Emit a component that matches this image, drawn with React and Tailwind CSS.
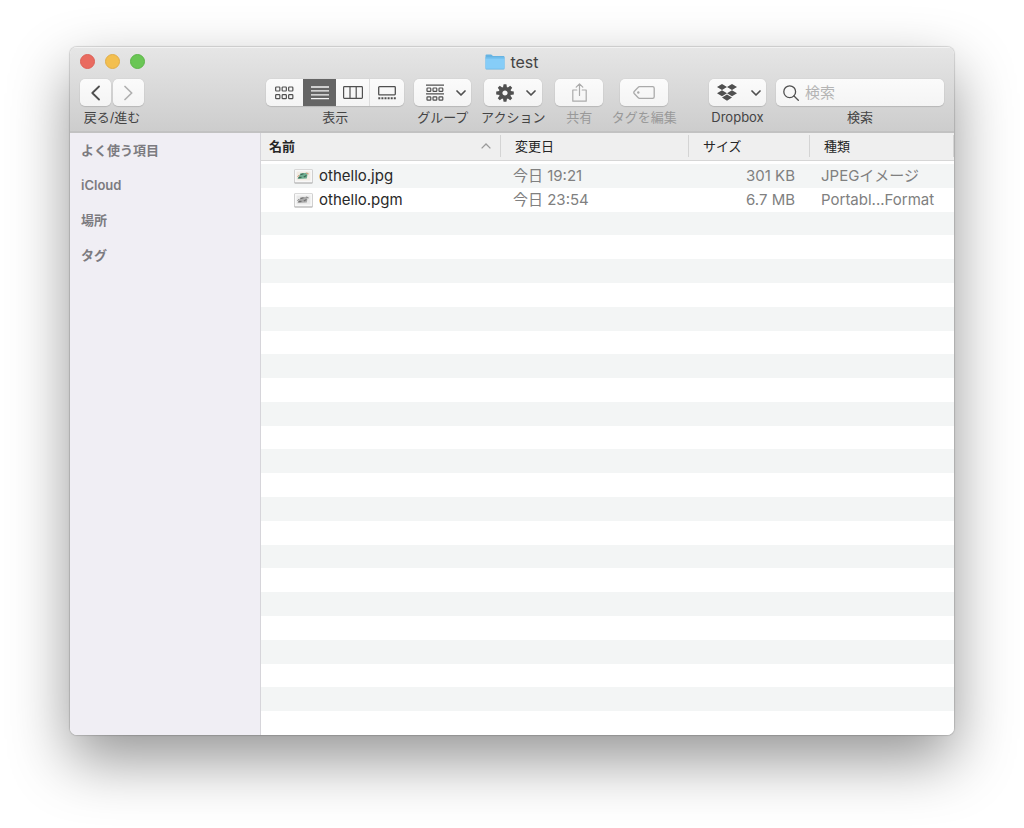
import React from 'react';

const columns = 'grid-cols-[240px_188px_121px_minmax(0,1fr)]';

const files = [
  { name: 'othello.jpg', date: '今日 19:21', size: '301 KB', kind: 'JPEGイメージ', color: true },
  { name: 'othello.pgm', date: '今日 23:54', size: '6.7 MB', kind: 'Portabl...Format', color: false },
];
const emptyRows = Array.from({ length: 22 }, (_, i) => i);
const places = ['よく使う項目', 'iCloud', '場所', 'タグ'];

const buttonLook =
  'flex h-[27px] items-center justify-center bg-linear-to-b from-[#fbfbfb] to-[#f4f4f4] text-[#505050]';
const raised = 'rounded-[5px] shadow-[0_0_1px_rgba(0,0,0,0.2),0_1px_1px_rgba(0,0,0,0.12)]';

function Item({ label, dim, width, children }) {
  return (
    <div className={`flex flex-none flex-col items-center ${width}`}>
      {children}
      <span className={`mt-[3px] text-[13px] leading-4 whitespace-nowrap ${dim ? 'text-[#999999]' : 'text-[#444444]'}`}>
        {label}
      </span>
    </div>
  );
}

function Chevron() {
  return (
    <svg className="h-[6px] w-[10px]" viewBox="0 0 10 6" fill="none" stroke="currentColor" strokeWidth="1.7" strokeLinecap="round" strokeLinejoin="round">
      <path d="M1 1l4 4 4-4" />
    </svg>
  );
}

function GridIcon() {
  const xs = [0.65, 7.15, 13.65];
  return (
    <svg className="h-[14px] w-[19px]" viewBox="0 0 19 14" fill="none" stroke="currentColor" strokeWidth="1.2">
      {[1, 8.7].map((y) => xs.map((x) => <rect key={`${x}-${y}`} x={x} y={y} width="4.2" height="4" rx="0.8" />))}
    </svg>
  );
}

function ListIcon() {
  return (
    <svg className="h-[14px] w-[18px]" viewBox="0 0 18 14" stroke="currentColor" strokeWidth="1.3">
      <path d="M0 1h18M0 4.9h18M0 8.8h18M0 12.7h18" />
    </svg>
  );
}

function ColumnsIcon() {
  return (
    <svg className="h-[13px] w-[20px]" viewBox="0 0 20 13" fill="none" stroke="currentColor" strokeWidth="1.2">
      <rect x="0.6" y="0.6" width="18.8" height="11.8" rx="0.8" />
      <path d="M7 .6v11.8M13.2 .6v11.8" />
    </svg>
  );
}

function GalleryIcon() {
  return (
    <svg className="h-[14px] w-[18px]" viewBox="0 0 18 14" fill="none" stroke="currentColor" strokeWidth="1.3">
      <rect x="0.7" y="0.7" width="16.6" height="8.2" rx="0.8" />
      <path d="M0.3 12.2h17.6" strokeWidth="2" strokeDasharray="2 1.1" />
    </svg>
  );
}

function GroupIcon() {
  const xs = [1, 7, 13];
  return (
    <svg className="h-[18px] w-[18px]" viewBox="0 0 18 18" fill="none" stroke="currentColor" strokeWidth="1.2">
      <path d="M0 1.2h18M0 9.9h18" />
      {[4, 12.8].map((y) => xs.map((x) => <rect key={`${x}-${y}`} x={x} y={y} width="3.8" height="3.4" rx="0.7" />))}
    </svg>
  );
}

function GearIcon() {
  return (
    <svg className="h-[18px] w-[18px]" viewBox="-9 -9 18 18">
      <circle r="4.4" fill="none" stroke="currentColor" strokeWidth="3.6" />
      {[0, 45, 90, 135, 180, 225, 270, 315].map((a) => (
        <path key={a} transform={`rotate(${a})`} d="M-2 -5.5L-1.4 -8.8H1.4L2 -5.5Z" fill="currentColor" />
      ))}
    </svg>
  );
}

function ShareIcon() {
  return (
    <svg className="h-[19px] w-[15px]" viewBox="0 0 15 19" fill="none" stroke="currentColor" strokeWidth="1.2" strokeLinecap="round" strokeLinejoin="round">
      <path d="M4.8 7H.8v11.2h13.4V7h-4M7.5 12.5V1M4.2 4.2L7.5 .9l3.3 3.3" />
    </svg>
  );
}

function TagIcon() {
  return (
    <svg className="h-[13px] w-[22px]" viewBox="0 0 22 13" fill="none" stroke="currentColor" strokeWidth="1.3" strokeLinejoin="round">
      <path d="M6.6 .7H19.6q1.6 0 1.6 1.6v8.4q0 1.6-1.6 1.6H6.6q-.9 0-1.6-.8L1.2 7.5q-.8-1 0-2L5 1.5q.7-.8 1.6-.8z" />
      <circle cx="5.3" cy="6.5" r="1.2" fill="currentColor" stroke="none" />
    </svg>
  );
}

function DropboxIcon() {
  return (
    <svg className="h-[17px] w-[20px]" viewBox="0 0 20 17" fill="currentColor">
      <path d="M5 0l5 3-5 3-5-3zM15 0l5 3-5 3-5-3zM5 6.2l5 3-5 3-5-3zM15 6.2l5 3-5 3-5-3zM10 10.6l5 3-5 3.1-5-3.1z" />
    </svg>
  );
}

function Folder() {
  return (
    <svg className="h-4 w-5" viewBox="0 0 20 16">
      <path d="M.5 1.600q0-1 1-1h4.500q.6 0 1 .5l.8.900h10.700q1 0 1 1V14.400q0 1-1 1H1.500q-1 0-1-1z" fill="#66b3e2" />
      <path d="M.5 4.300h19v9.700q0 .8-1 .8H1.500q-1 0-1-.8z" fill="#86cdf8" />
      <path d="M.5 3.200h19v1.200H.5z" fill="#74c0ee" />
    </svg>
  );
}

function Thumbnail({ color }) {
  return (
    <svg className="h-[15px] w-[19px] flex-none" viewBox="0 0 19 15">
      <rect x="0.3" y="1" width="18.4" height="13.6" rx="0.8" fill="#a0a0a0" />
      <rect x="0.5" y="0.5" width="18" height="13" rx="0.6" fill="#f8f8f8" stroke="#cccccc" strokeWidth="0.7" />
      <rect x="2.5" y="2.500" width="14" height="9" fill={color ? '#f1ebe3' : '#e9e9e9'} />
      <path d="M6.500 4.200l7.300-.4-1 5.800-9.300.4z" fill={color ? '#6fae90' : '#aaaaaa'} />
      <path d="M6.500 5.800l3-1M4.500 8.700l3-.3M9.800 8l2.700-1.500" stroke={color ? '#3f6453' : '#707070'} strokeWidth="1.200" />
      <path d="M12 4l2.800 1M3.500 8l1.500-2" stroke={color ? '#d9a080' : '#8c8c8c'} strokeWidth="1" />
    </svg>
  );
}

function Toolbar() {
  return (
    <div className="flex px-[10px]">
      <Item label="戻る/進む" width="w-16">
        <div className="flex gap-[2px]">
          <button type="button" aria-label="戻る" className={`${buttonLook} ${raised} w-[31px]`}>
            <svg className="h-4 w-[9px]" viewBox="0 0 9 16" fill="none" stroke="currentColor" strokeWidth="1.8" strokeLinecap="round" strokeLinejoin="round">
              <path d="M8 1.500L1.300 8 8 14.500" />
            </svg>
          </button>
          <button type="button" aria-label="進む" className={`${buttonLook} ${raised} w-[31px]`}>
            <svg className="h-4 w-[9px] text-[#b0b0b0]" viewBox="0 0 9 16" fill="none" stroke="currentColor" strokeWidth="1.7" strokeLinecap="round" strokeLinejoin="round">
              <path d="M1 1.500L7.700 8 1 14.500" />
            </svg>
          </button>
        </div>
      </Item>
      <div className="grow-[3]" />
      <Item label="表示" width="w-[138px]">
        <div className={`flex w-full overflow-hidden ${raised}`}>
          <button type="button" aria-label="アイコン" className={`${buttonLook} w-[37px]`}><GridIcon /></button>
          <button type="button" aria-label="リスト" aria-pressed="true" className="flex h-[27px] w-[33px] items-center justify-center bg-[#656565] text-[#f4f4f4]"><ListIcon /></button>
          <button type="button" aria-label="カラム" className={`${buttonLook} w-[34px] border-r border-[#dddddd]`}><ColumnsIcon /></button>
          <button type="button" aria-label="ギャラリー" className={`${buttonLook} w-[34px]`}><GalleryIcon /></button>
        </div>
      </Item>
      <div className="ml-[10px] flex gap-[13px]">
        <Item label="グループ" width="w-[57px]">
          <button type="button" aria-label="グループ" className={`${buttonLook} ${raised} w-full gap-3 pl-[6px]`}><GroupIcon /><Chevron /></button>
        </Item>
        <Item label="アクション" width="w-[58px]">
          <button type="button" aria-label="アクション" className={`${buttonLook} ${raised} w-full gap-3 pl-[6px]`}><GearIcon /><Chevron /></button>
        </Item>
        <Item label="共有" dim width="w-12">
          <button type="button" aria-label="共有" disabled className={`${buttonLook} ${raised} w-full`}>
            <span className="text-[#aaaaaa]"><ShareIcon /></span>
          </button>
        </Item>
      </div>
      <div className="ml-[17px]">
        <Item label="タグを編集" dim width="w-12">
          <button type="button" aria-label="タグを編集" disabled className={`${buttonLook} ${raised} w-full`}>
            <span className="text-[#aaaaaa]"><TagIcon /></span>
          </button>
        </Item>
      </div>
      <div className="grow" />
      <Item label="Dropbox" width="w-[57px]">
        <button type="button" aria-label="Dropbox" className={`${buttonLook} ${raised} w-full gap-[14px] pl-[2px]`}><DropboxIcon /><Chevron /></button>
      </Item>
      <div className="ml-[10px]">
        <Item label={<label htmlFor="search">検索</label>} width="w-[168px]">
          <div className={`${buttonLook} ${raised} w-full gap-[6px] px-[7px]`}>
            <svg className="h-4 w-4 flex-none" viewBox="0 0 16 16" fill="none" stroke="currentColor" strokeWidth="1.3" strokeLinecap="round">
              <circle cx="6.700" cy="6.700" r="5.900" />
              <path d="M11 11l4.300 4.300" />
            </svg>
            <input id="search" type="search" placeholder="検索" className="w-full min-w-0 bg-transparent text-[15px] leading-5 outline-none placeholder:text-[#b4b4b4]" />
          </div>
        </Item>
      </div>
    </div>
  );
}

function FileTable() {
  const head = 'text-left text-[13px] leading-[22px] text-[#262626]';
  const rule = 'mt-[2px] mb-[3px] border-r border-[#d4d4d4]';
  return (
    <table className="flex min-w-0 flex-1 flex-col bg-white">
      <thead className="mb-[3px] block border-b border-[#d6d6d6] bg-[#efefef]">
        <tr className={`grid h-[27px] ${columns}`}>
          <th scope="col" aria-sort="ascending" className={`${head} ${rule} flex items-center justify-between pr-[9px] pl-2`}>
            <span className="font-bold">名前</span>
            <svg className="h-[6px] w-[10px]" viewBox="0 0 10 6" fill="none" stroke="#9a9a9a" strokeWidth="1.3">
              <path d="M.6 5.400L5 1l4.400 4.400" />
            </svg>
          </th>
          <th scope="col" className={`${head} ${rule} pl-[14px] font-normal`}>変更日</th>
          <th scope="col" className={`${head} ${rule} pl-[14px] font-normal`}>サイズ</th>
          <th scope="col" className={`${head} ${rule} pl-[14px] font-normal`}>種類</th>
        </tr>
      </thead>
      <tbody className="grid flex-1 auto-rows-fr text-[15px] leading-5 text-[#808080]">
        {files.map((f) => (
          <tr key={f.name} className={`grid items-center odd:bg-[#f3f5f5] ${columns}`}>
            <td className="flex items-center gap-[6px] pt-px pl-[33px] text-[#292929]"><Thumbnail color={f.color} />{f.name}</td>
            <td className="pt-px pl-3">{f.date}</td>
            <td className="pt-px pr-[15px] text-right">{f.size}</td>
            <td className="pt-px pl-[11px] whitespace-nowrap">{f.kind}</td>
          </tr>
        ))}
        {emptyRows.map((i) => (
          <tr key={i} className="block min-h-[18px] odd:bg-[#f3f5f5]" />
        ))}
      </tbody>
    </table>
  );
}

export default function App() {
  return (
    <div className="flex min-h-screen bg-white px-[70px] pt-[47px] pb-[93px] font-['Inter','Noto_Sans_CJK_JP',sans-serif]">
      <main className="flex min-w-0 flex-1 flex-col overflow-hidden rounded-[7px] shadow-[0_0_1px_1px_rgba(0,0,0,0.14),0_25px_60px_rgba(0,0,0,0.42)]">
        <header className="h-[86px] border-b-2 border-[#c2c2c2] bg-linear-to-b from-[#e6e6e6] to-[#cdcdcd] shadow-[inset_0_1px_0_#f2f2f2]">
          <div className="mb-[3px] grid h-[29px] grid-cols-[1fr_auto_1fr] items-center px-[10px]">
            <div className="flex gap-[10px]">
              <button type="button" aria-label="閉じる" className="h-[15px] w-[15px] rounded-full border border-[#dc6056] bg-[#e96b60]" />
              <button type="button" aria-label="しまう" className="h-[15px] w-[15px] rounded-full border border-[#e0ad48] bg-[#f3bf4f]" />
              <button type="button" aria-label="拡大" className="h-[15px] w-[15px] rounded-full border border-[#5cb548] bg-[#6ac655]" />
            </div>
            <h1 className="flex items-center gap-[5px] text-[16px] leading-5 text-[#444444]"><Folder />test</h1>
          </div>
          <Toolbar />
        </header>
        <div className="flex flex-1">
          <nav className="w-[191px] flex-none border-r border-[#d6d5da] bg-[#f0eef4] pt-[7px] pl-[11px]">
            <ul className="flex flex-col gap-[15px] text-[13px] leading-5 font-semibold text-[#7c7b80]">
              {places.map((p) => <li key={p}>{p}</li>)}
            </ul>
          </nav>
          <FileTable />
        </div>
      </main>
    </div>
  );
}
